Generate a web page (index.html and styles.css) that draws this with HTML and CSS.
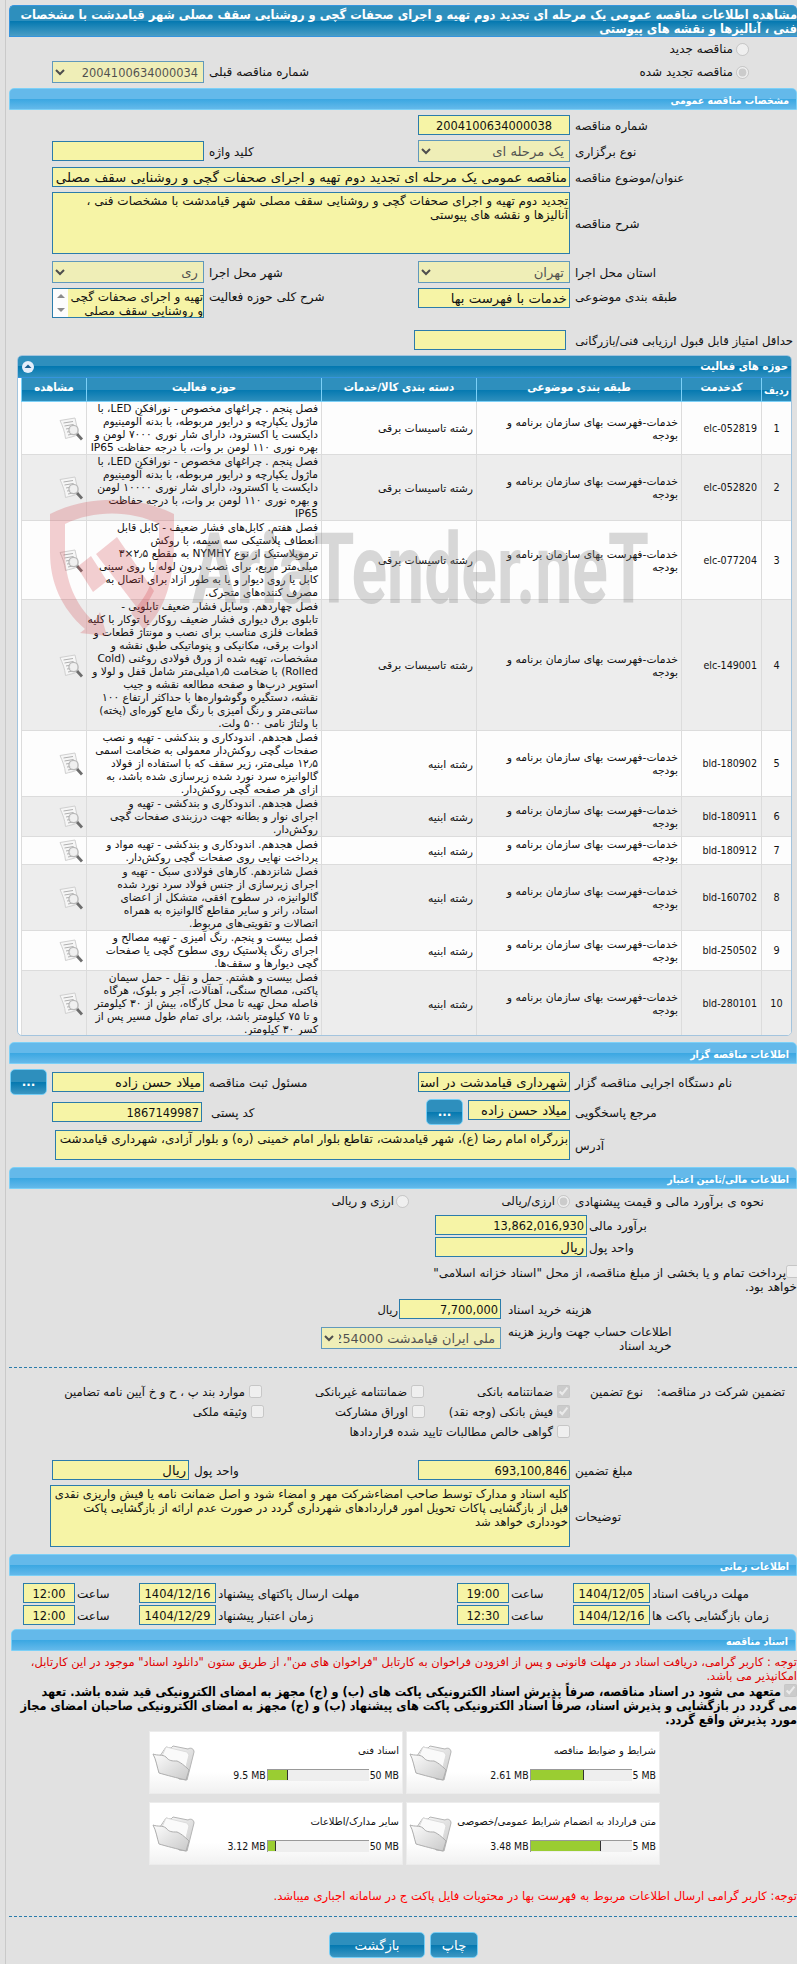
FILE: index.html
```
<!DOCTYPE html>
<html lang="fa" dir="rtl">

<head>
    <meta charset="UTF-8">
    <meta name="viewport" content="width=device-width, initial-scale=1.0">
    <title>مشاهده اطلاعات مناقصه</title>
    <link rel="stylesheet" href="styles.css">
</head>

<body>
    <!-- shared icons -->
    <svg class="sprite" width="0" height="0">
        <defs>
            <linearGradient id="paper" x1="0" y1="0" x2="1" y2="1">
                <stop offset="0" stop-color="#fdfdfd" />
                <stop offset="1" stop-color="#c9c9c9" />
            </linearGradient>
        </defs>
        <symbol id="icon-view" viewBox="0 0 24 24">
            <path d="M1 3.5 16 1l3.500 16c-4 3-9 3-13 4.500C6 15 3.500 9 1 3.500z" fill="#f6f6f6" stroke="#d0d0d0" />
            <path d="M4.500 6 14 4.500M5.500 9l9-1.500M7 12l5-1M8 15l4-.5M9 18l5-1" stroke="#b0b0b0" fill="none" />
            <circle cx="14.500" cy="13" r="4.600" fill="#efefef" fill-opacity=".85" stroke="#b8b8b8" stroke-width="1.300" />
            <path d="m18 17 5 5.500" stroke="#6d6d6d" stroke-width="2.800" fill="none" />
        </symbol>
        <symbol id="icon-folder" viewBox="0 0 44 38">
            <path d="M8 12 14 3l5 1 2-2 15 3c3-2 6 0 6 3l-7 28-8-1z" fill="url(#paper)" stroke="#b5b5b5" />
            <path d="m10 12 4-9 21 5 2 3-5 20z" fill="#fafafa" stroke="#dcdcdc" />
            <path d="M1 10c5 2 9 0 13 3 3 4 6 4 11 4 5 2 10 7 12 9l-3 10c-9-2-20-5-27-7C5 23 4 15 1 10z" fill="url(#paper)" stroke="#adadad" />
        </symbol>
    </svg>

    <div class="page">
        <h1 class="title">مشاهده اطلاعات مناقصه عمومی یک مرحله ای تجدید دوم تهیه و اجرای صحفات گچی و روشنایی سقف مصلی شهر قیامدشت با مشخصات<br>فنی ، آنالیزها و نقشه های پیوستی</h1>

        <div class="row kind">
            <label><input type="radio" name="kind" disabled>مناقصه جدید</label>
        </div>
        <div class="row kind kind-old">
            <label><input type="radio" name="kind" disabled checked>مناقصه تجدید شده</label>
            <span class="push">شماره مناقصه قبلی</span>
            <select class="w152" disabled><option>2004100634000034</option></select>
        </div>

        <h2>مشخصات مناقصه عمومی</h2>
        <div class="grid g5">
            <span>شماره مناقصه</span><input class="num center" value="2004100634000038">
        </div>
        <div class="grid g5 h22">
            <span>نوع برگزاری</span><select class="fa" disabled><option>یک مرحله ای</option></select>
            <span>کلید واژه</span><input>
        </div>
        <div class="grid g5">
            <span>عنوان/موضوع مناقصه</span><input class="wide subject" value="مناقصه عمومی یک مرحله ای تجدید دوم تهیه و اجرای صحفات گچی و روشنایی سقف مصلی شهر قیامدشت">
        </div>
        <div class="grid g5 h62">
            <span>شرح مناقصه</span>
            <div class="box wide">تجدید دوم تهیه و اجرای صحفات گچی و روشنایی سقف مصلی شهر قیامدشت با مشخصات فنی ،<br>آنالیزها و نقشه های پیوستی</div>
        </div>
        <div class="grid g7 h22">
            <span>استان محل اجرا</span><select class="fa" disabled><option>تهران</option></select>
            <span>شهر محل اجرا</span><select class="fa" disabled><option>ری</option></select>
        </div>
        <div class="grid g5 h30 top">
            <span>طبقه بندی موضوعی</span><input value="خدمات با فهرست بها">
            <span>شرح کلی حوزه فعالیت</span>
            <div class="box scrolled">
                <p>تهیه و اجرای صحفات گچی<br>و روشنایی سقف مصلی</p>
                <div class="bar"><i class="up"></i><i class="down"></i></div>
            </div>
        </div>
        <div class="row score">
            <span>حداقل امتیاز قابل قبول ارزیابی فنی/بازرگانی</span><input class="w152">
        </div>

        <div class="panel">
            <div class="panel-title">حوزه های فعالیت
                <svg width="12" height="12" viewBox="0 0 12 12"><circle cx="6" cy="6" r="6" fill="#e4eefb" /><path d="m2.500 7 3.500-3.500L9.500 7z" fill="#1a5f92" /></svg>
            </div>
            <table>
                <colgroup><col class="c1"><col class="c2"><col class="c3"><col class="c4"><col class="c5"><col class="c6"></colgroup>
                <tr><th class="first">ردیف</th><th>کدخدمت</th><th>طبقه بندی موضوعی</th><th>دسته بندی کالا/خدمات</th><th>حوزه فعالیت</th><th>مشاهده</th></tr>
                <tr class="l4">
                    <td>1</td><td class="en">elc-052819</td><td>خدمات-فهرست بهای سازمان برنامه و<br>بودجه</td><td>رشته تاسیسات برقی</td>
                    <td>فصل پنجم . چراغهای مخصوص - نورافکن LED، با<br>ماژول یکپارچه و درایور مربوطه، با بدنه آلومینیوم<br>دایکست یا اکسترود، دارای شار نوری ۷۰۰۰ لومن و<br>بهره نوری ۱۱۰ لومن بر وات، با درجه حفاظت IP65</td>
                    <td><svg class="view"><use href="#icon-view" /></svg></td>
                </tr>
                <tr class="l5">
                    <td>2</td><td class="en">elc-052820</td><td>خدمات-فهرست بهای سازمان برنامه و<br>بودجه</td><td>رشته تاسیسات برقی</td>
                    <td>فصل پنجم . چراغهای مخصوص - نورافکن LED، با<br>ماژول یکپارچه و درایور مربوطه، با بدنه آلومینیوم<br>دایکست یا اکسترود، دارای شار نوری ۱۰۰۰۰ لومن<br>و بهره نوری ۱۱۰ لومن بر وات، با درجه حفاظت<br>IP65</td>
                    <td><svg class="view"><use href="#icon-view" /></svg></td>
                </tr>
                <tr class="l6">
                    <td>3</td><td class="en">elc-077204</td><td>خدمات-فهرست بهای سازمان برنامه و<br>بودجه</td><td>رشته تاسیسات برقی</td>
                    <td>فصل هفتم. کابل‌های فشار ضعیف - کابل قابل<br>انعطاف پلاستیکی سه سیمه، با روکش<br>ترموپلاستیک از نوع NYMHY به مقطع ۲٫۵×۳<br>میلی‌متر مربع، برای نصب درون لوله یا روی سینی<br>کابل یا روی دیوار و یا به طور آزاد برای اتصال به<br>مصرف کننده‌های متحرک.</td>
                    <td><svg class="view"><use href="#icon-view" /></svg></td>
                </tr>
                <tr class="l10">
                    <td>4</td><td class="en">elc-149001</td><td>خدمات-فهرست بهای سازمان برنامه و<br>بودجه</td><td>رشته تاسیسات برقی</td>
                    <td>فصل چهاردهم. وسایل فشار ضعیف تابلویی -<br>تابلوی برق دیواری فشار ضعیف روکار یا توکار با کلیه<br>قطعات فلزی مناسب برای نصب و مونتاژ قطعات و<br>ادوات برقی، مکانیکی و پنوماتیکی طبق نقشه و<br>مشخصات، تهیه شده از ورق فولادی روغنی (Cold<br>Rolled) با ضخامت ۱٫۵میلی‌متر شامل قفل و لولا و<br>استوپر درب‌ها و صفحه مطالعه نقشه و جیب<br>نقشه، دستگیره وگوشواره‌ها با حداکثر ارتفاع ۱۰۰<br>سانتی‌متر و رنگ آمیزی با رنگ مایع کوره‌ای (پخته)<br>با ولتاژ نامی ۵۰۰ ولت.</td>
                    <td><svg class="view"><use href="#icon-view" /></svg></td>
                </tr>
                <tr class="l5">
                    <td>5</td><td class="en">bld-180902</td><td>خدمات-فهرست بهای سازمان برنامه و<br>بودجه</td><td>رشته ابنیه</td>
                    <td>فصل هجدهم. اندودکاری و بندکشی - تهیه و نصب<br>صفحات گچی روکش‌دار معمولی به ضخامت اسمی<br>۱۲٫۵ میلی‌متر، زیر سقف که با استفاده از فولاد<br>گالوانیزه سرد نورد شده زیرسازی شده باشد، به<br>ازای هر صفحه گچی روکش‌دار.</td>
                    <td><svg class="view"><use href="#icon-view" /></svg></td>
                </tr>
                <tr class="l3">
                    <td>6</td><td class="en">bld-180911</td><td>خدمات-فهرست بهای سازمان برنامه و<br>بودجه</td><td>رشته ابنیه</td>
                    <td>فصل هجدهم. اندودکاری و بندکشی - تهیه و<br>اجرای نوار و بطانه جهت درزبندی صفحات گچی<br>روکش‌دار.</td>
                    <td><svg class="view"><use href="#icon-view" /></svg></td>
                </tr>
                <tr class="l2">
                    <td>7</td><td class="en">bld-180912</td><td>خدمات-فهرست بهای سازمان برنامه و<br>بودجه</td><td>رشته ابنیه</td>
                    <td>فصل هجدهم. اندودکاری و بندکشی - تهیه مواد و<br>پرداخت نهایی روی صفحات گچی روکش‌دار.</td>
                    <td><svg class="view"><use href="#icon-view" /></svg></td>
                </tr>
                <tr class="l5">
                    <td>8</td><td class="en">bld-160702</td><td>خدمات-فهرست بهای سازمان برنامه و<br>بودجه</td><td>رشته ابنیه</td>
                    <td>فصل شانزدهم. کارهای فولادی سبک - تهیه و<br>اجرای زیرسازی از جنس فولاد سرد نورد شده<br>گالوانیزه، در سطوح افقی، متشکل از اعضای<br>استاد، رانر و سایر مقاطع گالوانیزه به همراه<br>اتصالات و تقویتی‌های مربوط.</td>
                    <td><svg class="view"><use href="#icon-view" /></svg></td>
                </tr>
                <tr class="l3">
                    <td>9</td><td class="en">bld-250502</td><td>خدمات-فهرست بهای سازمان برنامه و<br>بودجه</td><td>رشته ابنیه</td>
                    <td>فصل بیست و پنجم. رنگ آمیزی - تهیه مصالح و<br>اجرای رنگ پلاستیک روی سطوح گچی یا صفحات<br>گچی دیوارها و سقف‌ها.</td>
                    <td><svg class="view"><use href="#icon-view" /></svg></td>
                </tr>
                <tr class="l5">
                    <td>10</td><td class="en">bld-280101</td><td>خدمات-فهرست بهای سازمان برنامه و<br>بودجه</td><td>رشته ابنیه</td>
                    <td>فصل بیست و هشتم. حمل و نقل - حمل سیمان<br>پاکتی، مصالح سنگی، آهنآلات، آجر و بلوک، هرگاه<br>فاصله محل تهیه تا محل کارگاه، بیش از ۳۰ کیلومتر<br>و تا ۷۵ کیلومتر باشد، برای تمام طول مسیر پس از<br>کسر ۳۰ کیلومتر.</td>
                    <td><svg class="view"><use href="#icon-view" /></svg></td>
                </tr>
            </table>
            <!-- watermark over the table -->
            <svg class="watermark" viewBox="0 0 610 150">
                <g fill="#d23c41" fill-opacity=".24">
                    <path fill-rule="evenodd" d="M5 20C43 1 91 1 129 20v25c0 40-8 70-30 91L86 119c18-17 28-42 28-75V30C86 16 48 16 20 30v28c0 28 10 52 29 70l6-10 7 24-27-3 5-4C16 114 5 88 5 58z" />
                    <path d="m32 73 14-11 16 25-14 11zM51 60l21-17 37 54c-4 8-8 15-13 22z" />
                </g>
                <text x="147" y="109" textLength="457" lengthAdjust="spacingAndGlyphs">AriaTender.neT</text>
            </svg>
        </div>

        <h2 class="g6">اطلاعات مناقصه گزار</h2>
        <div class="grid g5 h25">
            <span>نام دستگاه اجرایی مناقصه گزار</span><input value="شهرداری قیامدشت در استان تهران">
            <span>مسئول ثبت مناقصه</span><input value="میلاد حسن زاده">
            <button class="dots">...</button>
        </div>
        <div class="grid contact">
            <span>مرجع پاسخگویی</span>
            <div class="pair"><input value="میلاد حسن زاده"><button class="dots">...</button></div>
            <span>کد پستی</span><input class="num" value="1867149987">
        </div>
        <div class="grid g5 h30">
            <span>آدرس</span>
            <div class="box wide address">بزرگراه امام رضا (ع)، شهر قیامدشت، تقاطع بلوار امام خمینی (ره) و بلوار آزادی، شهرداری قیامدشت</div>
        </div>

        <h2 class="g7">اطلاعات مالی/تامین اعتبار</h2>
        <div class="grid g2 currency">
            <span>نحوه ی برآورد مالی و قیمت پیشنهادی</span>
            <label><input type="radio" name="cur" disabled checked>ارزی/ریالی</label>
            <label><input type="radio" name="cur" disabled>ارزی و ریالی</label>
        </div>
        <div class="grid money g4"><span>برآورد مالی</span><input class="num" value="13,862,016,930"></div>
        <div class="grid money g2"><span>واحد پول</span><input value="ریال"></div>
        <div class="treasury">
            <input type="checkbox" disabled>پرداخت تمام و یا بخشی از مبلغ مناقصه، از محل "اسناد خزانه اسلامی"<br><span>خواهد بود.</span>
        </div>
        <div class="grid price g5"><span>هزینه خرید اسناد</span><input class="num" value="7,700,000"><span class="unit">ریال</span></div>
        <div class="grid account"><span>اطلاعات حساب جهت واریز هزینه<br>خرید اسناد</span><select class="bank fa" disabled><option>ملی ایران قیامدشت 254000</option></select></div>

        <hr>

        <div class="guarantee">
            <span>تضمین شرکت در مناقصه:</span>
            <span>نوع تضمین</span>
            <div class="checks">
                <div><label class="a"><input type="checkbox" disabled checked>ضمانتنامه بانکی</label><label class="b"><input type="checkbox" disabled>ضمانتنامه غیربانکی</label><label><input type="checkbox" disabled>موارد بند پ ، ح و خ آیین نامه تضامین</label></div>
                <div class="second"><label class="a"><input type="checkbox" disabled checked>فیش بانکی (وجه نقد)</label><label class="b"><input type="checkbox" disabled>اوراق مشارکت</label><label><input type="checkbox" disabled>وثیقه ملکی</label></div>
                <div><label><input type="checkbox" disabled>گواهی خالص مطالبات تایید شده قراردادها</label></div>
            </div>
        </div>
        <div class="grid amount">
            <span>مبلغ تضمین</span><input class="num" value="693,100,846">
            <span>واحد پول</span><input value="ریال">
        </div>
        <div class="grid g5 h62">
            <span>توضیحات</span>
            <div class="box wide notes">کلیه اسناد و مدارک توسط صاحب امضاءشرکت مهر و امضاء شود و اصل ضمانت نامه یا فیش واریزی نقدی<br>قبل از بازگشایی پاکات تحویل امور قراردادهای شهرداری گردد در صورت عدم ارائه از بازگشایی پاکت<br>خودداری خواهد شد</div>
        </div>

        <h2 class="g7">اطلاعات زمانی</h2>
        <div class="times">
            <span>مهلت دریافت اسناد</span><input class="num" value="1404/12/05"><span>ساعت</span><input class="num" value="19:00">
            <span>مهلت ارسال پاکتهای پیشنهاد</span><input class="num" value="1404/12/16"><span>ساعت</span><input class="num" value="12:00">
            <span>زمان بازگشایی پاکت ها</span><input class="num" value="1404/12/16"><span>ساعت</span><input class="num" value="12:30">
            <span>زمان اعتبار پیشنهاد</span><input class="num" value="1404/12/29"><span>ساعت</span><input class="num" value="12:00">
        </div>

        <h2 class="docs-title">اسناد مناقصه</h2>
        <p class="notice">توجه : کاربر گرامی، دریافت اسناد در مهلت قانونی و پس از افزودن فراخوان به کارتابل "فراخوان های من"، از طریق ستون "دانلود اسناد" موجود در این کارتابل،<br>امکانپذیر می باشد.</p>
        <p class="commit"><input type="checkbox" disabled checked>متعهد می شود در اسناد مناقصه، صرفاً پذیرش اسناد الکترونیکی پاکت های (ب) و (ج) مجهز به امضای الکترونیکی قید شده باشد. تعهد<br>می گردد در بازگشایی و پذیرش اسناد، صرفاً اسناد الکترونیکی پاکت های پیشنهاد (ب) و (ج) مجهز به امضای الکترونیکی صاحبان امضای مجاز<br>مورد پذیرش واقع گردد.</p>

        <div class="cards">
            <div class="card">
                <div class="info"><b>شرایط و ضوابط مناقصه</b>
                    <div class="usage"><span>5 MB</span><div class="track"><i style="width: 53%"></i></div><span>2.61 MB</span></div>
                </div>
                <svg class="folder"><use href="#icon-folder" /></svg>
            </div>
            <div class="card">
                <div class="info"><b>اسناد فنی</b>
                    <div class="usage"><span>50 MB</span><div class="track"><i style="width: 20%"></i></div><span>9.5 MB</span></div>
                </div>
                <svg class="folder"><use href="#icon-folder" /></svg>
            </div>
            <div class="card">
                <div class="info"><b>متن قرارداد به انضمام شرایط عمومی/خصوصی</b>
                    <div class="usage"><span>5 MB</span><div class="track"><i style="width: 70%"></i></div><span>3.48 MB</span></div>
                </div>
                <svg class="folder"><use href="#icon-folder" /></svg>
            </div>
            <div class="card">
                <div class="info"><b>سایر مدارک/اطلاعات</b>
                    <div class="usage"><span>50 MB</span><div class="track"><i style="width: 8%"></i></div><span>3.12 MB</span></div>
                </div>
                <svg class="folder"><use href="#icon-folder" /></svg>
            </div>
        </div>

        <p class="warning">توجه: کاربر گرامی ارسال اطلاعات مربوط به فهرست بها در محتویات فایل پاکت ج در سامانه اجباری میباشد.</p>
        <hr class="last">
        <div class="actions"><button>چاپ</button><button class="back">بازگشت</button></div>
    </div>
</body>

</html>
```
FILE: styles.css
```
* {
    box-sizing: border-box;
}

body {
    margin: 0;
    background-color: #e1e1e1;
    color: #111;
    font: 12px/14px "DejaVu Sans", sans-serif;
    white-space: nowrap;
    overflow: hidden;
}

.sprite {
    display: block;
}

.page {
    height: 1964px;
    margin-left: 5px;
    padding: 5px 0 0 3px;
    border-left: 1px solid #c9c9c9;
    overflow: hidden;
}

h1, h2, p {
    margin: 0;
}

.title {
    height: 32px;
    padding-top: 2px;
    border: 1px solid #3594dd;
    border-right: 0;
    border-radius: 5px 5px 0 0;
    background: linear-gradient(#2e8fbd 50%, #0378b0 50%, #4a9dc5);
    color: white;
    font: bold 12.75px/14px "DejaVu Sans Condensed", sans-serif;
}

h2 {
    height: 22px;
    margin-top: 5px;
    padding: 1px 7px 0 0;
    border: 1px solid #7cd0f7;
    border-radius: 5px 5px 0 0;
    background: linear-gradient(#64b9ea 50%, #3aa7e2 50%, #64b9ea);
    color: white;
    font: bold 10.4px/20px "DejaVu Sans Condensed", sans-serif;
}

/* form controls */
input, select, .box {
    margin: 0;
    border: 1px solid #2b7cab;
    border-radius: 0;
    background-color: #f6f4a6;
    color: #111;
    font: 13.2px/18px "DejaVu Sans", sans-serif;
}

input {
    width: 100%;
    height: 20px;
    padding: 1px 2px 0;
}

.num {
    direction: ltr;
    text-align: right;
    font: 12.7px/18px "DejaVu Sans Condensed", sans-serif;
}

.center, .times .num {
    text-align: center;
}

select {
    width: 100%;
    height: 22px;
    padding: 0 1px;
    font: 12.7px "DejaVu Sans Condensed", sans-serif;
}

select.fa {
    font: 13.2px "DejaVu Sans", sans-serif;
}

select.bank {
    font-size: 12.8px;
}

input[type="radio"],
input[type="checkbox"] {
    flex: none;
    width: 13px;
    height: 13px;
}

.w152 {
    width: 152px;
}

.box {
    height: 100%;
    padding: 1px 1px 0;
    font: 12px/14px "DejaVu Sans", sans-serif;
    overflow: hidden;
}

.g2 { margin-top: 2px; }
.g4 { margin-top: 4px; }
.g5 { margin-top: 5px; }
.g6 { margin-top: 6px; }
.g7 { margin-top: 7px; }

/* form rows */
.row, label {
    display: flex;
    align-items: center;
}

.kind {
    height: 20px;
    margin-top: 2px;
    padding-right: 48px;
}

.kind label {
    gap: 3px;
}

.kind-old {
    height: 22px;
}

.kind-old .push {
    margin: 0 auto 0 5px;
}

.kind-old select {
    margin-left: 43px;
}

.grid {
    display: grid;
    grid-template-columns: 222px 152px 204px 152px 37px;
    column-gap: 5px;
    align-items: center;
    height: 20px;
}

.grid > span {
    padding-top: 2px;
    text-align: left;
}

.h22 { height: 22px; }
.h25 { height: 25px; }
.h30 { height: 30px; }
.h62 { height: 62px; }

.wide {
    grid-column: 2 / 5;
}

.subject {
    font-size: 13.4px;
}

.top {
    align-items: start;
}

.scrolled {
    display: flex;
    justify-content: space-between;
    height: 30px;
    padding: 1px 0 0;
}

.bar {
    display: flex;
    flex-direction: column;
    justify-content: space-between;
    align-items: center;
    width: 15px;
    margin-top: -1px;
    padding: 5px 0;
    background-color: #fcfcfc;
}

.up, .down {
    border: 4px solid transparent;
    border-top: 0;
    border-bottom-color: #8b8b8b;
}

.down {
    border-top: 4px solid #8b8b8b;
    border-bottom: 0;
}

.score {
    justify-content: flex-start;
    gap: 9px;
    height: 20px;
    margin-top: 12px;
    padding-right: 4px;
}

.score span {
    width: 218px;
    padding-top: 2px;
    font-size: 11.7px;
}

/* activities table */
.panel {
    position: relative;
    width: 775px;
    height: 681px;
    margin: 5px 5px 0 0;
    border: 1px solid #a3c4de;
    border-radius: 5px;
    background-color: white;
    overflow: hidden;
}

.panel-title {
    display: flex;
    justify-content: space-between;
    align-items: center;
    height: 22px;
    padding: 0 3px 0 4px;
    border-bottom: 1px solid #3594dd;
    background: linear-gradient(#2e8fbd 50%, #0378b0 50%, #2e8fbd);
    color: white;
    font: bold 11.3px "DejaVu Sans Condensed", sans-serif;
}

table {
    width: 770px;
    table-layout: fixed;
    border-collapse: separate;
    border-spacing: 0;
    font-size: 10.8px;
    line-height: 13px;
}

.c1 { width: 30px; }
.c2 { width: 80px; }
.c3 { width: 205px; }
.c4 { width: 155px; }
.c5 { width: 235px; }
.c6 { width: 65px; }

th {
    height: 24px;
    padding: 0 0 4px;
    border-left: 1px solid #7cd0f7;
    border-bottom: 1px solid #7cd0f7;
    background: linear-gradient(#2e8fbd 50%, #0378b0 50%, #2e8fbd);
    color: white;
    font: bold 11.3px "DejaVu Sans Condensed", sans-serif;
}

th.first {
    padding: 0;
    font-size: 10.4px;
}

td {
    padding: 1px 3px 0 0;
    border-left: 1px solid #dcdcdc;
    border-bottom: 1px solid #dcdcdc;
    background-color: #fdfdfd;
    vertical-align: middle;
}

td:nth-child(5) {
    padding-top: 0;
    font-size: 10.65px;
}

tr:nth-child(odd) td {
    background-color: #ededed;
}

td:first-child {
    padding: 0;
    text-align: center;
    font-family: "DejaVu Sans Condensed", sans-serif;
}

.en {
    direction: ltr;
    padding: 0 3px 0 0;
    text-align: right;
    font-family: "DejaVu Sans Condensed", sans-serif;
    font-size: 10.6px;
}

.l2 { height: 27px; }
.l3 { height: 40px; }
.l4 { height: 53px; }
.l5 { height: 66px; }
.l6 { height: 79px; }
.l10 { height: 131px; }

.view {
    display: block;
    width: 24px;
    height: 24px;
}

.watermark {
    position: absolute;
    left: 27px;
    top: 138px;
    width: 610px;
    height: 150px;
}

.watermark text {
    direction: ltr;
    fill: #808080;
    fill-opacity: .3;
    font: bold 98px "Roboto", sans-serif;
}

/* buttons */
button {
    height: 26px;
    padding: 0;
    border: 1px solid #74cdf5;
    border-radius: 5px;
    background: linear-gradient(#2e8fbd 50%, #0378b0 50%, #3d97c2);
    color: white;
    font: 13.2px "DejaVu Sans", sans-serif;
}

.dots {
    width: 37px;
    height: 26px;
    font-weight: bold;
    font-size: 12px;
}

/* owner */
.contact {
    grid-template-columns: 222px 152px 206px 150px;
    height: 26px;
    margin-top: 5px;
}

.contact > span:nth-of-type(2) {
    padding-left: 4px;
}

.pair {
    display: flex;
    justify-content: space-between;
    width: 144px;
}

.pair input {
    width: 102px;
    margin-top: 1px;
}

.address {
    margin-left: 3px;
}

/* money */
.currency {
    grid-template-columns: 222px 156px 100px;
}

.currency label {
    gap: 2px;
    font-size: 11.7px;
}

.money {
    grid-template-columns: 208px 152px;
    column-gap: 2px;
}

.treasury {
    margin: 8px -2px 0 0;
    line-height: 14px;
}

.treasury input {
    vertical-align: -1px;
}

.treasury span {
    margin-right: 2px;
}

.price {
    grid-template-columns: 289px 102px 30px;
    column-gap: 7px;
}

.price .unit {
    margin-right: -6px;
    text-align: right;
    font-size: 11.5px;
}

.account {
    grid-template-columns: 289px 180px;
    column-gap: 7px;
    height: 22px;
    margin-top: 4px;
}

.account > span {
    justify-self: end;
    text-align: right;
    font-size: 11.8px;
}

hr {
    height: 0;
    margin: 22px 0 0;
    border: 0;
    border-top: 1px dashed #2b7cab;
}

/* guarantee */
.guarantee {
    display: flex;
    height: 60px;
    margin-top: 16px;
    padding-right: 12px;
    line-height: 16px;
    font-size: 11.8px;
}

.guarantee > span:first-child {
    width: 142px;
}

.guarantee > span:nth-child(2) {
    width: 73px;
}

.checks {
    font-size: 11.6px;
}

.checks > div {
    display: flex;
    height: 20px;
}

.checks label {
    gap: 4px;
    height: 15px;
}

.checks .a {
    width: 146px;
}

.checks .b {
    width: 162px;
}

.checks .second .a {
    width: 145px;
}

.checks .second .b {
    width: 161px;
}

.amount {
    grid-template-columns: 222px 152px 219px 137px;
    margin-top: 16px;
}

.notes {
    margin-left: -2px;
    font-size: 11.6px;
}

/* deadlines */
.times {
    display: grid;
    grid-template-columns: 145px 77px 60px 52px 237px 77px 60px 52px;
    column-gap: 2px;
    row-gap: 2px;
    align-items: center;
    margin-top: 7px;
}

.times span {
    padding-top: 2px;
    text-align: left;
}

/* documents */
.docs-title {
    margin: 4px 1px 0 2px;
}

.notice {
    margin-top: 4px;
    color: #e00000;
    font-size: 11.5px;
}

.commit {
    margin-top: 1px;
    color: #000;
    font: bold 12.6px/14px "DejaVu Sans Condensed", sans-serif;
}

.commit input {
    margin-left: 3px;
    vertical-align: -1px;
}

.cards {
    display: grid;
    grid-template-columns: 254px 254px;
    gap: 8px 3px;
    margin: 4px 137px 0 0;
}

.card {
    display: flex;
    justify-content: space-between;
    height: 63px;
    padding: 12px 3px 0 2px;
    border: 1px solid #ececec;
    background: linear-gradient(white 65%, #f1f1f1);
}

.info b {
    display: block;
    font-weight: normal;
    font-size: 10px;
}

.usage {
    display: flex;
    align-items: center;
    gap: 1px;
    margin-top: 11px;
    font: 10.4px/12px "DejaVu Sans Condensed", sans-serif;
}

.usage span {
    direction: ltr;
}

.track {
    width: 102px;
    height: 12px;
    border-top: 1px solid #999;
    border-left: 1px solid #999;
    background-color: #eee;
    direction: ltr;
}

.track i {
    display: block;
    height: 10px;
    border-right: 1px solid #333;
    background-color: #9acd32;
}

.folder {
    width: 44px;
    height: 38px;
}

.warning {
    margin-top: 24px;
    color: #ff0000;
    font-size: 11.6px;
}

.last {
    margin-top: 13px;
}

.actions {
    display: flex;
    gap: 5px;
    margin: 15px 319px 0 0;
}

.actions button {
    width: 48px;
}

.actions .back {
    width: 96px;
}
```
